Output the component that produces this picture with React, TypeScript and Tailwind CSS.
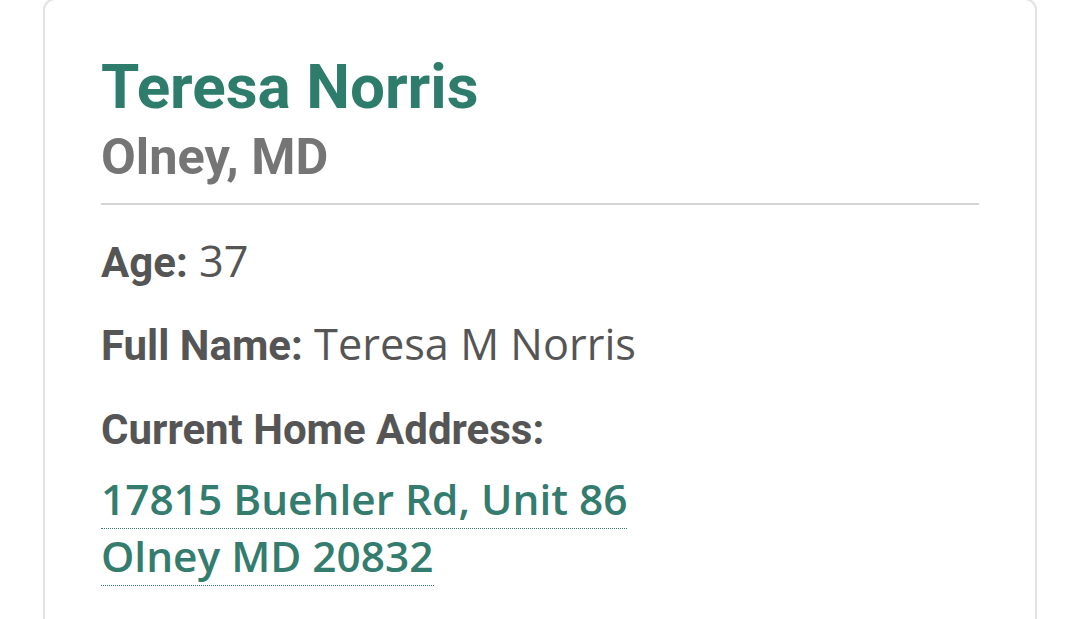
import React from "react";

const person = {
  name: "Teresa Norris",
  city: "Olney, MD",
  age: "37",
  fullName: "Teresa M Norris",
  street: "17815 Buehler Rd, Unit 86",
  cityLine: "Olney MD 20832",
};

const Label = ({ children }: { children: React.ReactNode }) => (
  <span className="font-['Roboto',sans-serif] text-[42px] font-bold">{children}</span>
);

const App = () => {
  return (
    <div className="min-h-[619px] w-full overflow-hidden bg-white">
      <div className="mx-[43px] -mt-[2px] min-h-[640px] rounded-[12px] border-2 border-[#e2e2e2] px-[56px] pt-[56px]">
        <h1 className="font-['Roboto',sans-serif] text-[62px] font-bold leading-[62px] text-[#2e7d6c]">
          {person.name}
        </h1>
        <h2 className="mt-[14px] font-['Roboto',sans-serif] text-[50.5px] font-bold leading-[50px] text-[#757575]">
          {person.city}
        </h2>
        <div className="mt-[21px] h-[2px] bg-[#d4d4d4]" />

        <div className="font-['Open_Sans',sans-serif] text-[43.3px] leading-[42px] text-[#555555]">
          <p className="mt-[35px]">
            <Label>Age:</Label> {person.age}
          </p>
          <p className="mt-[39px]">
            <Label>Full Name:</Label> {person.fullName}
          </p>
          <p className="mt-[40px]">
            <Label>Current Home Address:</Label>
          </p>
        </div>

        <p className="mt-[19px] font-['Open_Sans',sans-serif] text-[42.4px] font-semibold leading-[57px] text-[#337c6e]">
          <a className="border-b-[1.5px] border-dotted border-[#2f7a6b] pb-[1px]">
            {person.street}
            <br />
            {person.cityLine}
          </a>
        </p>
      </div>
    </div>
  );
};

export default App;
